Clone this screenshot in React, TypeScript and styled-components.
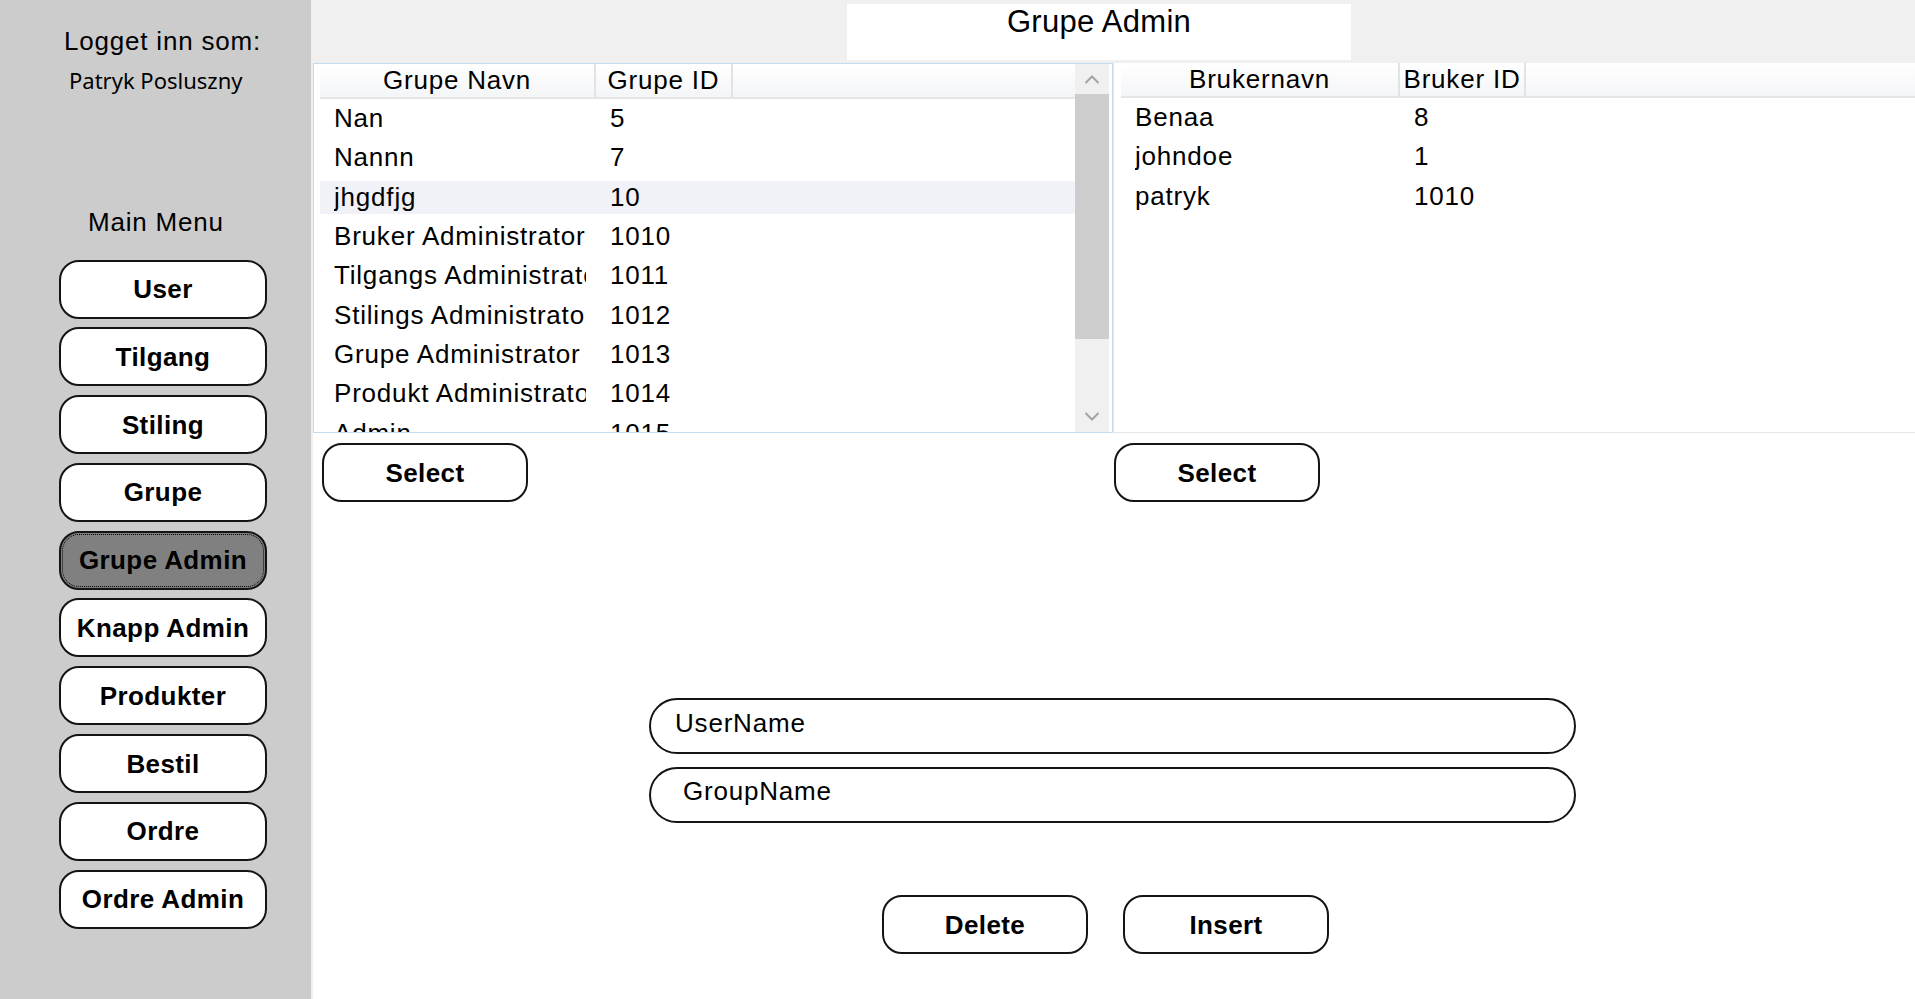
import React from "react";
import styled, { createGlobalStyle } from "styled-components";

const GlobalStyle = createGlobalStyle`
  html, body { margin: 0; padding: 0; background: #ffffff; }
  body { font-family: "Liberation Sans", Arial, sans-serif; color: #000; }
  #root { width: 1915px; height: 999px; overflow: hidden; }
  * { box-sizing: border-box; }
`;

const Shell = styled.div`
  display: flex;
  width: 1915px;
  height: 999px;
`;

const Sidebar = styled.aside`
  width: 311px;
  flex: none;
  background: #cccccc;
  display: flex;
  flex-direction: column;
  align-items: flex-start;
  padding-top: 26px;
`;

const SideLabel = styled.div<{ $x: number; $top: number }>`
  margin-left: ${(p) => p.$x}px;
  margin-top: ${(p) => p.$top}px;
  font-size: 26px;
  line-height: 30px;
  letter-spacing: 0.8px;
  white-space: nowrap;
`;

const UserNameLabel = styled.div`
  margin-left: 69px;
  margin-top: 8.5px;
  font-family: "Noto Sans", "Open Sans", sans-serif;
  font-size: 22px;
  line-height: 30px;
  white-space: nowrap;
`;

const NavList = styled.nav`
  margin-top: 23px;
  margin-left: 59px;
  display: flex;
  flex-direction: column;
  gap: 8.8px;
`;

const PillButton = styled.button`
  height: 59px;
  padding: 0;
  border: 2px solid #141414;
  border-radius: 20px;
  background: #ffffff;
  color: #000;
  font-family: "Liberation Sans", Arial, sans-serif;
  font-weight: 700;
  font-size: 26px;
  letter-spacing: 0.4px;
  line-height: 30px;
  cursor: pointer;
`;

const NavButton = styled(PillButton)<{ $active?: boolean }>`
  width: 208px;
  background: ${(p) => (p.$active ? "#808080" : "#ffffff")};
  outline: ${(p) => (p.$active ? "1px dotted #000" : "none")};
  outline-offset: -4px;
`;

const ActionButton = styled(PillButton)`
  width: 206px;
`;

const Main = styled.main`
  flex: 1;
  display: flex;
  flex-direction: column;
  border-left: 2px solid #f0f0f0;
  background: #ffffff;
  min-width: 0;
`;

const TopBar = styled.header`
  height: 63px;
  background: #f0f0f0;
  padding-top: 4px;
  padding-left: 534px;
`;

const TitleBox = styled.div`
  width: 504px;
  height: 56px;
  background: #ffffff;
  text-align: center;
  font-size: 31px;
  line-height: 36px;
  letter-spacing: 0.3px;
`;

const ListsRow = styled.section`
  display: flex;
  height: 370px;
`;

const ListBox = styled.div`
  width: 800px;
  flex: none;
  border: 1px solid #c4dbf0;
  display: flex;
  background: #ffffff;
`;

const ListContent = styled.div`
  flex: 1;
  min-width: 0;
  padding-left: 6px;
  overflow: hidden;
`;

const RightList = styled.div`
  flex: 1;
  min-width: 0;
  border-left: 1px solid #e2ebf5;
  border-bottom: 1px solid #e6e6e6;
  padding-left: 7px;
  background: #ffffff;
  overflow: hidden;
`;

const Header = styled.div`
  display: flex;
  height: 35px;
  border-bottom: 2px solid #e5e5e5;
  background: linear-gradient(#ffffff, #f4f5f7);
`;

const HeaderCell = styled.div<{ $w: number }>`
  width: ${(p) => p.$w}px;
  flex: none;
  border-right: 2px solid #e3e3e3;
  text-align: center;
  font-size: 26px;
  line-height: 33px;
  letter-spacing: 0.8px;
  white-space: nowrap;
  overflow: hidden;
`;

const Row = styled.div`
  height: 39.3px;
  padding: 3px 0;
  display: flex;
`;

const RowInner = styled.div<{ $selected?: boolean }>`
  flex: 1;
  display: flex;
  align-items: center;
  background: ${(p) => (p.$selected ? "#f1f2f7" : "transparent")};
`;

const Cell = styled.div<{ $w: number }>`
  width: ${(p) => p.$w}px;
  flex: none;
  padding-left: 14px;
  font-size: 26px;
  line-height: 33px;
  letter-spacing: 0.8px;
`;

const CellText = styled.span<{ $w: number }>`
  display: block;
  width: ${(p) => p.$w}px;
  overflow: hidden;
  white-space: nowrap;
`;

const Scrollbar = styled.div`
  width: 34px;
  flex: none;
  margin-right: 3px;
  display: flex;
  flex-direction: column;
  background: #f0f0f0;
`;

const ScrollArrow = styled.div<{ $h: number }>`
  height: ${(p) => p.$h}px;
  flex: none;
  display: flex;
  align-items: center;
  justify-content: center;
`;

const ScrollTrack = styled.div`
  flex: 1;
  display: flex;
  flex-direction: column;
`;

const ScrollThumb = styled.div`
  height: 245px;
  background: #cdcdcd;
`;

const SelectRow = styled.div`
  display: grid;
  grid-template-columns: 800px 1fr;
  margin-top: 10px;
`;

const SelectCell = styled.div<{ $pad: number }>`
  padding-left: ${(p) => p.$pad}px;
`;

const Fields = styled.div`
  margin-top: 196px;
  margin-left: 336px;
  width: 927px;
  display: flex;
  flex-direction: column;
  gap: 12.7px;
`;

const TextBox = styled.div<{ $pad: number }>`
  height: 56px;
  border: 2px solid #141414;
  border-radius: 28px;
  padding-left: ${(p) => p.$pad}px;
  padding-bottom: 6px;
  display: flex;
  align-items: center;
  font-size: 26px;
  letter-spacing: 0.8px;
  background: #ffffff;
`;

const BottomRow = styled.div`
  margin-top: 72.7px;
  margin-left: 569px;
  display: flex;
  gap: 35px;
`;

const Chevron = ({ up }: { up?: boolean }) => (
  <svg width="16" height="9" viewBox="0 0 16 9">
    <polyline
      points={up ? "1.5,8 8,1.5 14.5,8" : "1.5,1 8,7.5 14.5,1"}
      fill="none"
      stroke="#a3a3a3"
      strokeWidth="2"
    />
  </svg>
);

const groups: [string, string][] = [
  ["Nan", "5"],
  ["Nannn", "7"],
  ["jhgdfjg", "10"],
  ["Bruker Administrator", "1010"],
  ["Tilgangs Administrator", "1011"],
  ["Stilings Administrator", "1012"],
  ["Grupe Administrator", "1013"],
  ["Produkt Administrator", "1014"],
  ["Admin", "1015"],
];

const users: [string, string][] = [
  ["Benaa", "8"],
  ["johndoe", "1"],
  ["patryk", "1010"],
];

const menu = [
  "User",
  "Tilgang",
  "Stiling",
  "Grupe",
  "Grupe Admin",
  "Knapp Admin",
  "Produkter",
  "Bestil",
  "Ordre",
  "Ordre Admin",
];

export default function App() {
  return (
    <>
      <GlobalStyle />
      <Shell>
        <Sidebar>
          <SideLabel $x={64} $top={0}>Logget inn som:</SideLabel>
          <UserNameLabel>Patryk Posluszny</UserNameLabel>
          <SideLabel $x={88} $top={112}>Main Menu</SideLabel>
          <NavList>
            {menu.map((m) => (
              <NavButton key={m} $active={m === "Grupe Admin"}>
                {m}
              </NavButton>
            ))}
          </NavList>
        </Sidebar>
        <Main>
          <TopBar>
            <TitleBox>Grupe Admin</TitleBox>
          </TopBar>
          <ListsRow>
            <ListBox>
              <ListContent>
                <Header>
                  <HeaderCell $w={276}>Grupe Navn</HeaderCell>
                  <HeaderCell $w={137}>Grupe ID</HeaderCell>
                </Header>
                {groups.map(([name, id]) => (
                  <Row key={id}>
                    <RowInner $selected={name === "jhgdfjg"}>
                      <Cell $w={276}>
                        <CellText $w={252}>{name}</CellText>
                      </Cell>
                      <Cell $w={137}>
                        <CellText $w={113}>{id}</CellText>
                      </Cell>
                    </RowInner>
                  </Row>
                ))}
              </ListContent>
              <Scrollbar>
                <ScrollArrow $h={30}>
                  <Chevron up />
                </ScrollArrow>
                <ScrollTrack>
                  <ScrollThumb />
                </ScrollTrack>
                <ScrollArrow $h={31}>
                  <Chevron />
                </ScrollArrow>
              </Scrollbar>
            </ListBox>
            <RightList>
              <Header>
                <HeaderCell $w={279}>Brukernavn</HeaderCell>
                <HeaderCell $w={126}>Bruker ID</HeaderCell>
              </Header>
              {users.map(([name, id]) => (
                <Row key={name}>
                  <RowInner>
                    <Cell $w={279}>
                      <CellText $w={255}>{name}</CellText>
                    </Cell>
                    <Cell $w={126}>
                      <CellText $w={102}>{id}</CellText>
                    </Cell>
                  </RowInner>
                </Row>
              ))}
            </RightList>
          </ListsRow>
          <SelectRow>
            <SelectCell $pad={9}>
              <ActionButton>Select</ActionButton>
            </SelectCell>
            <SelectCell $pad={1}>
              <ActionButton>Select</ActionButton>
            </SelectCell>
          </SelectRow>
          <Fields>
            <TextBox $pad={24}>UserName</TextBox>
            <TextBox $pad={32}>GroupName</TextBox>
          </Fields>
          <BottomRow>
            <ActionButton>Delete</ActionButton>
            <ActionButton>Insert</ActionButton>
          </BottomRow>
        </Main>
      </Shell>
    </>
  );
}
